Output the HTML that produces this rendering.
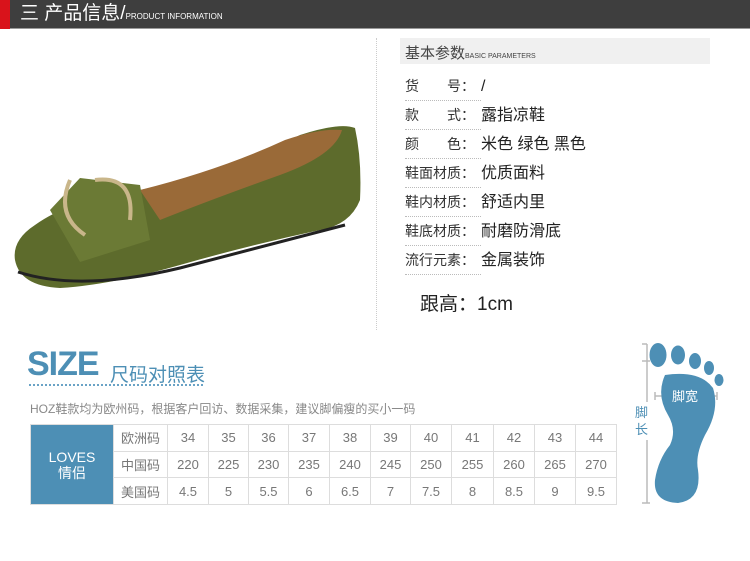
<!DOCTYPE html><html><head><meta charset="utf-8"><style>
*{margin:0;padding:0;box-sizing:border-box}
body{width:750px;height:561px;background:#fff;font-family:"Liberation Sans","Noto Sans CJK SC",sans-serif;position:relative;overflow:hidden;color:#333}
.a{position:absolute;white-space:nowrap}
.row{position:absolute;left:405px;font-size:16px;color:#222;width:300px;white-space:nowrap;line-height:20px}
.row .l{display:inline-block;width:76px;border-bottom:1px dotted #bbb;padding-bottom:4px;font-size:14px;white-space:nowrap;color:#333}
table{position:absolute;left:30px;top:424px;border-collapse:collapse;font-size:13px;color:#777}
td{border:1px solid #ddd;height:26.7px;text-align:center;padding:0}
</style></head><body>
<div class="a" style="left:0;top:0;width:750px;height:29px;background:#3e3e3e;border-bottom:1px solid #999"></div>
<div class="a" style="left:0;top:0;width:10px;height:29px;background:#d9131b"></div>
<div class="a" style="left:20px;top:3px;color:#fff;font-size:19px;line-height:22px">三 产品信息/<span style="font-size:8px">PRODUCT INFORMATION</span></div>
<div class="a" style="left:376px;top:38px;height:292px;border-left:1px dotted #ccc"></div>
<div class="a" style="left:400px;top:38px;width:310px;height:26px;background:#f0f0f0;padding:4px 5px;font-size:15px;color:#444">基本参数<span style="font-size:7px">BASIC PARAMETERS</span></div>
<div class="row" style="top:76px"><span class="l">货　　号：</span>/</div>
<div class="row" style="top:105px"><span class="l">款　　式：</span>露指凉鞋</div>
<div class="row" style="top:134px"><span class="l">颜　　色：</span>米色 绿色 黑色</div>
<div class="row" style="top:163px"><span class="l">鞋面材质：</span>优质面料</div>
<div class="row" style="top:192px"><span class="l">鞋内材质：</span>舒适内里</div>
<div class="row" style="top:221px"><span class="l">鞋底材质：</span>耐磨防滑底</div>
<div class="row" style="top:250px"><span class="l">流行元素：</span>金属装饰</div>
<div class="a" style="left:420px;top:289px;font-size:19px;color:#222">跟高：1cm</div>
<svg class="a" style="left:0;top:100px" width="370" height="200">
<path d="M15 160 Q12 140 35 125 Q70 100 130 92 Q220 75 300 35 Q340 22 355 28 Q362 60 360 100 Q350 125 320 130 Q250 145 180 165 Q110 185 60 188 Q20 186 15 160Z" fill="#5d6b2c"/>
<path d="M140 90 Q220 70 285 40 Q320 28 342 30 Q335 55 280 75 Q210 100 160 120Z" fill="#9a6a38"/>
<path d="M50 110 L80 78 L140 85 L150 140 L80 162 Z" fill="#6b7a35"/>
<path d="M70 80 Q55 115 85 135 M95 80 Q135 75 130 120" stroke="#c9b68a" stroke-width="4" fill="none"/>
<path d="M18 172 Q80 192 180 168 L345 125" stroke="#222" stroke-width="3" fill="none"/>
</svg>
<div class="a" style="left:27px;top:345px;font-size:34px;font-weight:bold;color:#4d8fb5;letter-spacing:-1px">SIZE</div>
<div class="a" style="left:110px;top:360px;font-size:19px;color:#4d8fb5">尺码对照表</div>
<div class="a" style="left:29px;top:384px;width:174px;border-top:2px dotted #6aa3c6"></div>
<div class="a" style="left:30px;top:400px;font-size:12px;color:#888">HOZ鞋款均为欧州码，根据客户回访、数据采集，建议脚偏瘦的买小一码</div>
<table>
<tr><td rowspan="3" style="width:83px;background:#4d8fb5;color:#fff;font-size:14px;line-height:16px">LOVES<br>情侣</td><td style="width:54px">欧洲码</td><td style="width:41px">34</td><td style="width:40px">35</td><td style="width:40px">36</td><td style="width:41px">37</td><td style="width:41px">38</td><td style="width:40px">39</td><td style="width:41px">40</td><td style="width:42px">41</td><td style="width:41px">42</td><td style="width:41px">43</td><td style="width:41px">44</td></tr>
<tr><td>中国码</td><td>220</td><td>225</td><td>230</td><td>235</td><td>240</td><td>245</td><td>250</td><td>255</td><td>260</td><td>265</td><td>270</td></tr>
<tr><td>美国码</td><td>4.5</td><td>5</td><td>5.5</td><td>6</td><td>6.5</td><td>7</td><td>7.5</td><td>8</td><td>8.5</td><td>9</td><td>9.5</td></tr>
</table>
<svg class="a" style="left:620px;top:330px" width="130" height="231">
<g stroke="#bbb" stroke-width="1.5" fill="none"><path d="M27 14 V72 M27 110 V173 M22 14 H27 M22 31 H30 M22 173 H30"/><path d="M35 66 H51 M80 66 H97 M35 62 V70 M97 62 V70"/></g>
<g fill="#4d8fb5"><ellipse cx="38" cy="25" rx="8.5" ry="12"/><ellipse cx="58" cy="25" rx="7" ry="9.5"/><ellipse cx="75" cy="31" rx="6" ry="8"/><ellipse cx="89" cy="38" rx="5" ry="7"/><ellipse cx="99" cy="50" rx="4.5" ry="6"/>
<path d="M45 45 Q80 40 93 58 Q100 80 85 105 Q75 125 78 140 Q82 170 58 173 Q33 172 35 150 Q38 130 50 115 Q57 100 48 85 Q36 65 45 45Z"/></g>
<text x="52" y="71" font-size="13" fill="#fff" font-family="Noto Sans CJK SC,sans-serif">脚宽</text>
<text x="15" y="87" font-size="13" fill="#4d8fb5" font-family="Noto Sans CJK SC,sans-serif">脚</text>
<text x="15" y="104" font-size="13" fill="#4d8fb5" font-family="Noto Sans CJK SC,sans-serif">长</text>
</svg>
</body></html>
